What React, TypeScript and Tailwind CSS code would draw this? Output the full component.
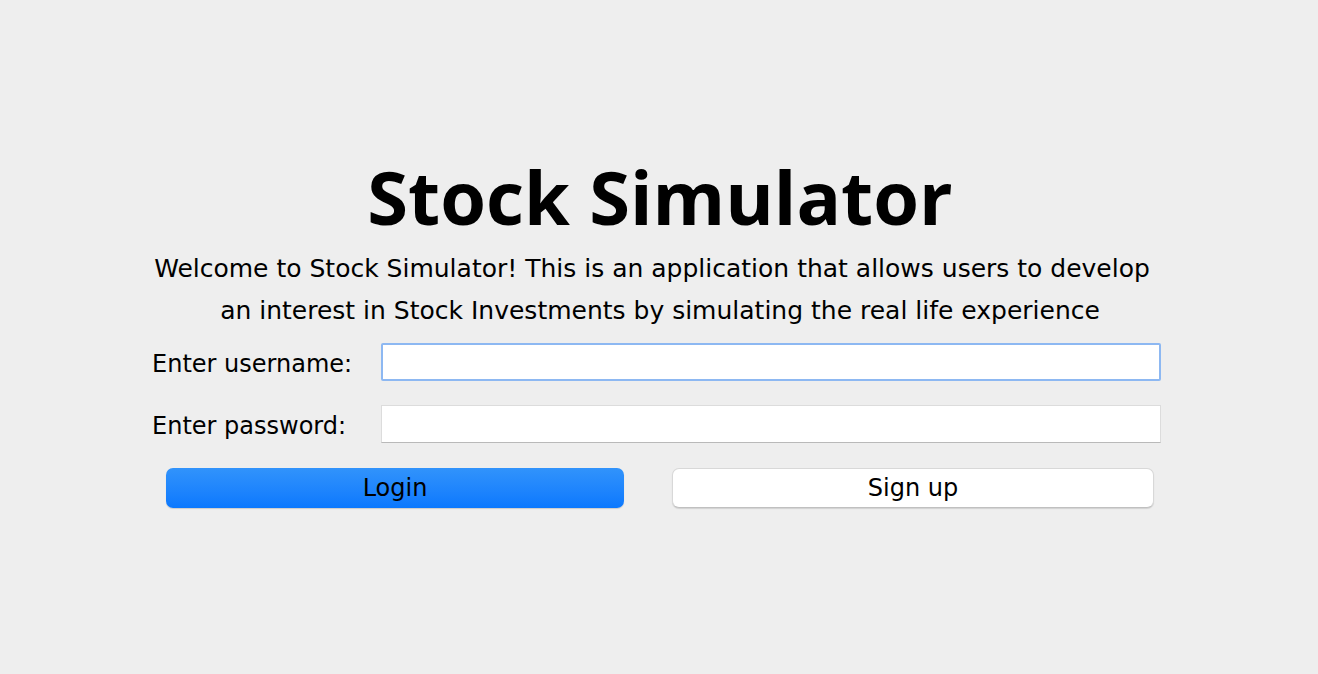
export default function App() {
  return (
    <div className="min-h-screen bg-[#eeeeee] flex flex-col items-center text-black font-['DejaVu_Sans',sans-serif]">
      <div className="w-[1014px] pt-[160px] pr-[4px] flex flex-col">
        {/* Title */}
        <h1 className="text-[74px] font-bold leading-none h-[77px] pl-[6px] text-center font-['Open_Sans',sans-serif]">
          Stock Simulator
        </h1>

        {/* Intro */}
        <div className="mt-[11px] text-[25px] leading-[42px] text-center">
          <p className="pr-[10px]">Welcome to Stock Simulator! This is an application that allows users to develop</p>
          <p className="pl-[6px]">an interest in Stock Investments by simulating the real life experience</p>
        </div>

        {/* Form */}
        <div className="mt-[11px] flex items-center h-[38px]">
          <label className="w-[229px] text-[24px] pt-[3px]">Enter username:</label>
          <input
            type="text"
            className="w-[780px] h-[38px] bg-white border-2 border-[#8db8f2] rounded-[2px] outline-none px-2"
          />
        </div>
        <div className="mt-[24px] flex items-center h-[38px]">
          <label className="w-[229px] text-[24px] pt-[3px]">Enter password:</label>
          <input
            type="password"
            className="w-[780px] h-[38px] bg-white border border-[#dcdcdc] border-b-[#b9b9b9] outline-none px-2"
          />
        </div>

        {/* Buttons */}
        <div className="mt-[25px] flex h-[40px]">
          <button className="ml-[14px] w-[458px] h-[40px] rounded-[7px] bg-gradient-to-b from-[#3193fb] to-[#0a78fe] text-[24px] shadow-[0_1px_1px_rgba(0,0,0,0.15)]">
            Login
          </button>
          <button className="ml-[48px] w-[482px] h-[40px] rounded-[7px] bg-white text-[24px] border border-[#d8d8d8] border-b-[#c0c0c0] shadow-[0_1px_1px_rgba(0,0,0,0.12)]">
            Sign up
          </button>
        </div>
      </div>
    </div>
  );
}
